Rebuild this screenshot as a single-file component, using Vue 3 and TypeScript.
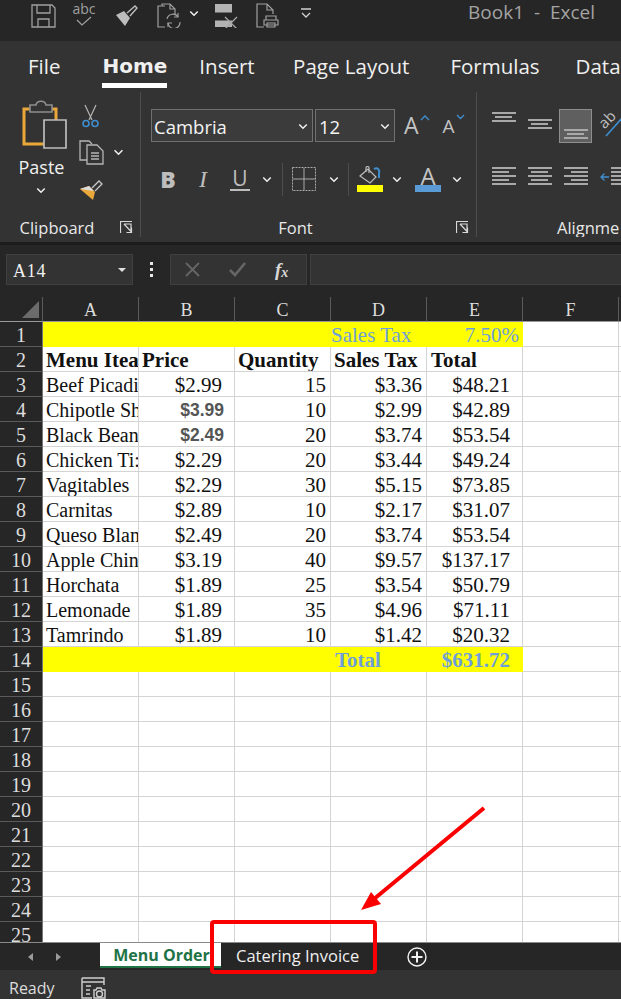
<script setup lang="ts">
interface Row {
  a?: string
  b?: string
  c?: string
  d?: string
  e?: string
}

const items: Row[] = [
  { a: 'Beef Picadi', b: '$2.99', c: '15', d: '$3.36', e: '$48.21' },
  { a: 'Chipotle Sh', b: '$3.99', c: '10', d: '$2.99', e: '$42.89' },
  { a: 'Black Bean', b: '$2.49', c: '20', d: '$3.74', e: '$53.54' },
  { a: 'Chicken Ti:', b: '$2.29', c: '20', d: '$3.44', e: '$49.24' },
  { a: 'Vagitables', b: '$2.29', c: '30', d: '$5.15', e: '$73.85' },
  { a: 'Carnitas', b: '$2.89', c: '10', d: '$2.17', e: '$31.07' },
  { a: 'Queso Blan', b: '$2.49', c: '20', d: '$3.74', e: '$53.54' },
  { a: 'Apple Chin', b: '$3.19', c: '40', d: '$9.57', e: '$137.17' },
  { a: 'Horchata', b: '$1.89', c: '25', d: '$3.54', e: '$50.79' },
  { a: 'Lemonade', b: '$1.89', c: '35', d: '$4.96', e: '$71.11' },
  { a: 'Tamrindo', b: '$1.89', c: '10', d: '$1.42', e: '$20.32' }
]

const columns = ['A', 'B', 'C', 'D', 'E', 'F']
const emptyRows = Array.from({ length: 11 }, (_, i) => i + 15)
const tabs = ['File', 'Home', 'Insert', 'Page Layout', 'Formulas', 'Data']
</script>

<template>
  <div class="excel">
    <svg width="0" height="0" class="defs">
      <defs>
        <symbol id="chev" viewBox="0 0 12 8">
          <path d="M1.5 1.5 6 6l4.5-4.5" fill="none" stroke="#f0f0f0" stroke-width="1.8" />
        </symbol>
        <symbol id="launcher" viewBox="0 0 13 13">
          <path d="M.5 12V.5H12M4 3h7v7M4 3l8 8.5M11.5 6.5v5h-5" fill="none" stroke="#d8d8d8" stroke-width="1.2" />
        </symbol>
      </defs>
    </svg>

    <header class="titlebar">
      <div class="qat">
        <svg class="q-save" width="25" height="26" viewBox="0 0 25 26" fill="none" stroke="#a0a0a0" stroke-width="1.3">
          <path d="M1 3h20l3 3v19H1zM6 3v8h13V3M7 25v-8h11v8" />
        </svg>
        <div class="q-abc">
          <span>abc</span>
          <svg width="16" height="10" viewBox="0 0 16 10"><path d="M1 4l5 5 9-8" fill="none" stroke="#a0a0a0" stroke-width="1.2" /></svg>
        </div>
        <svg class="q-brush" width="24" height="22" viewBox="0 0 24 22">
          <path d="M2 10l8-4 6 7-5 8z" fill="#bdbdbd" />
          <path d="M13 8l8-7 2 2-7 8" fill="none" stroke="#bdbdbd" stroke-width="1.4" />
        </svg>
        <svg class="q-doc" width="24" height="25" viewBox="0 0 24 25" fill="none" stroke="#a0a0a0" stroke-width="1.2">
          <path d="M8 24H1V3h7M5 3V1h8l5 5v5M13 1v5h5" />
          <path d="M10 16a6 6 0 0 1 11-2M23 19a6 6 0 0 1-12 1" />
          <path d="M21 10v4h-4M11 24v-4h4" />
        </svg>
        <svg class="q-chev" width="10" height="7"><use href="#chev" /></svg>
        <svg class="q-close" width="23" height="25" viewBox="0 0 23 25">
          <path d="M0 1h17v23H0z" fill="#b3b3b3" />
          <path d="M0 9.500h17v8H0z" fill="#262626" />
          <path d="M10 14l12 12M22 14 10 26" stroke="#a8a8a8" stroke-width="1.3" />
        </svg>
        <svg class="q-print" width="23" height="25" viewBox="0 0 23 25" fill="none" stroke="#a0a0a0" stroke-width="1.2">
          <path d="M8 24H1V1h10l6 6v4M11 1v6h6" />
          <path d="M10 13h10v4H10zM8 17h14v5H8zM11 20h8v4h-8z" fill="#262626" />
        </svg>
        <svg class="q-custom" width="12" height="11" viewBox="0 0 12 11" fill="none" stroke="#d0d0d0" stroke-width="1.3">
          <path d="M1 1h10M2 5l4 4 4-4" />
        </svg>
      </div>
      <div class="doc-title">Book1&nbsp; -&nbsp; Excel</div>
    </header>

    <nav class="tabs">
      <span v-for="t in tabs" :key="t" :class="['tab', { active: t === 'Home' }]">{{ t }}</span>
    </nav>

    <section class="ribbon">
      <div class="group clipboard">
        <div class="group-body clip-body">
          <div class="paste">
            <svg width="46" height="50" viewBox="0 0 46 50">
              <path d="M2 9h32v35H2z" fill="none" stroke="#eba83a" stroke-width="3" />
              <path d="M8 12V5h6c1-5 9-5 10 0h6v7z" fill="#333" stroke="#8f8f8f" stroke-width="1.6" />
              <path d="M22 20h22v28H22z" fill="#333" stroke="#bdbdbd" stroke-width="1.7" />
            </svg>
            <span class="paste-label">Paste</span>
            <svg class="paste-chev" width="10" height="7"><use href="#chev" /></svg>
          </div>
          <div class="clip-tools">
            <svg width="17" height="24" viewBox="0 0 17 24" fill="none">
              <path d="M3 1l7 15M14 1 7 16" stroke="#b5b5b5" stroke-width="1.2" />
              <circle cx="4" cy="19.500" r="3" stroke="#3f8fd0" stroke-width="1.6" />
              <circle cx="13" cy="19.500" r="3" stroke="#3f8fd0" stroke-width="1.6" />
            </svg>
            <div class="copy-row">
              <svg width="25" height="25" viewBox="0 0 25 25" fill="none" stroke="#b5b5b5" stroke-width="1.3">
                <path d="M8 20H1V1h9l3 3" />
                <path d="M8 5h10l6 6v13H8z" fill="#333" />
                <path d="M12 13h8M12 16h8M12 19h8" stroke-width="1.5" />
              </svg>
              <svg width="11" height="7"><use href="#chev" /></svg>
            </div>
            <svg class="painter" width="24" height="21" viewBox="0 0 24 21">
              <path d="M1 9l13 11 2-8-6-6z" fill="#eba83a" />
              <path d="M1 9l9-3 5 5" fill="#dcdcdc" />
              <path d="M13 8l7-7 3 3-7 7" fill="none" stroke="#c8c8c8" stroke-width="1.3" />
            </svg>
          </div>
        </div>
        <div class="group-label">
          <span>Clipboard</span>
          <svg class="launcher" width="13" height="13"><use href="#launcher" /></svg>
        </div>
      </div>

      <div class="group font">
        <div class="group-body font-body">
          <div class="font-row">
            <div class="select font-name">
              <span>Cambria</span>
              <svg width="10" height="7"><use href="#chev" /></svg>
            </div>
            <div class="select font-size">
              <span>12</span>
              <svg width="10" height="7"><use href="#chev" /></svg>
            </div>
            <div class="grow-btn">
              <span class="big-a">A</span>
              <svg width="10" height="6" viewBox="0 0 10 6"><path d="M1 5l4-4 4 4" fill="none" stroke="#3f8fd0" stroke-width="1.3" /></svg>
            </div>
            <div class="shrink-btn">
              <span class="small-a">A</span>
              <svg width="9" height="6" viewBox="0 0 9 6"><path d="M1 1l3.500 3.500L8 1" fill="none" stroke="#3f8fd0" stroke-width="1.3" /></svg>
            </div>
          </div>
          <div class="format-row">
            <span class="fmt bold">B</span>
            <span class="fmt italic">I</span>
            <span class="fmt under">U</span>
            <svg class="c-under" width="10" height="7"><use href="#chev" /></svg>
            <i class="divider d1"></i>
            <svg class="borders" width="24" height="24" viewBox="0 0 24 24" fill="none" stroke="#aaa">
              <path d="M.5.500h23v23H.5z" stroke-dasharray="2 1" />
              <path d="M12 1v22M1 12h22" />
            </svg>
            <svg class="c-borders" width="10" height="7"><use href="#chev" /></svg>
            <i class="divider d2"></i>
            <div class="swatch-btn fill-btn">
              <svg width="23" height="19" viewBox="0 0 23 19" fill="none">
                <path d="M1 10l8-7 8 8-6 6z" stroke="#bdbdbd" stroke-width="1.2" />
                <path d="M7 6V2c0-2 3-2 3 0v5" stroke="#bdbdbd" stroke-width="1.2" />
                <path d="M15 3c4-2 6 1 5 5v4" stroke="#3f8fd0" stroke-width="2" />
              </svg>
              <b class="swatch yellow"></b>
            </div>
            <svg class="c-fill" width="10" height="7"><use href="#chev" /></svg>
            <div class="swatch-btn color-btn">
              <span class="color-a">A</span>
              <b class="swatch blue"></b>
            </div>
            <svg class="c-color" width="10" height="7"><use href="#chev" /></svg>
          </div>
        </div>
        <div class="group-label">
          <span>Font</span>
          <svg class="launcher" width="13" height="13"><use href="#launcher" /></svg>
        </div>
      </div>

      <div class="group align">
        <div class="group-body align-body">
          <div class="align-row top-row">
            <div class="lines v-top"><i class="w24"></i><i class="w18"></i><i class="w24"></i></div>
            <div class="lines v-mid"><i class="w24"></i><i class="w18"></i><i class="w24"></i></div>
            <div class="v-active">
              <div class="lines"><i class="w24"></i><i class="w18"></i><i class="w24"></i></div>
            </div>
            <svg class="orient" width="24" height="28" viewBox="0 0 24 28">
              <text x="0" y="17" transform="rotate(-45 7 12)" class="orient-text">ab</text>
              <path d="M7 27 24 8" stroke="#3f8fd0" stroke-width="1.6" />
            </svg>
          </div>
          <div class="align-row bottom-row">
            <div class="lines a-left"><i class="w24"></i><i class="w18"></i><i class="w24"></i><i class="w18"></i><i class="w24"></i></div>
            <div class="lines a-center"><i class="w24"></i><i class="w18"></i><i class="w24"></i><i class="w18"></i><i class="w24"></i></div>
            <div class="lines a-right"><i class="w24"></i><i class="w18"></i><i class="w24"></i><i class="w18"></i><i class="w24"></i></div>
            <div class="indent">
              <svg width="10" height="10" viewBox="0 0 10 10"><path d="M9 5H1M4.500 1.500 1 5l3.500 3.500" fill="none" stroke="#3f8fd0" stroke-width="1.3" /></svg>
              <div class="lines"><i class="w24"></i><i class="w24"></i><i class="w24"></i><i class="w24"></i><i class="w24"></i></div>
            </div>
          </div>
        </div>
        <div class="group-label align-label"><span>Alignme</span></div>
      </div>
    </section>

    <section class="formula-strip">
      <div class="name-box">
        <span>A14</span>
        <b class="caret"></b>
      </div>
      <div class="grip"><i></i><i></i><i></i></div>
      <div class="fx-box">
        <svg width="15" height="15" viewBox="0 0 15 15"><path d="M1 1l13 13M14 1 1 14" stroke="#666" stroke-width="1.8" /></svg>
        <svg width="17" height="15" viewBox="0 0 17 15"><path d="M1 8l5 5L16 1" fill="none" stroke="#666" stroke-width="2.6" /></svg>
        <span class="fx">f<sub>x</sub></span>
      </div>
      <div class="formula-input"></div>
    </section>

    <section class="sheet">
      <div class="corner"><b></b></div>
      <div v-for="c in columns" :key="c" class="col-head">{{ c }}</div>
      <div class="col-tail"></div>

      <div class="row-head">1</div>
      <div class="cell fill"></div>
      <div class="cell fill"></div>
      <div class="cell fill"></div>
      <div class="cell fill blue-text tax-label">Sales Tax</div>
      <div class="cell fill blue-text right tax-value">7.50%</div>
      <div class="cell"></div>
      <div class="cell-tail"></div>

      <div class="row-head">2</div>
      <div class="cell strong">Menu Itea</div>
      <div class="cell strong">Price</div>
      <div class="cell strong">Quantity</div>
      <div class="cell strong">Sales Tax</div>
      <div class="cell strong total-head">Total</div>
      <div class="cell"></div>
      <div class="cell-tail"></div>

      <template v-for="(r, i) in items" :key="i">
        <div class="row-head">{{ i + 3 }}</div>
        <div class="cell name">{{ r.a }}</div>
        <div :class="['cell', 'right', 'money', { dim: i === 1 || i === 2 }]">{{ r.b }}</div>
        <div class="cell right">{{ r.c }}</div>
        <div class="cell right">{{ r.d }}</div>
        <div class="cell right money">{{ r.e }}</div>
        <div class="cell"></div>
        <div class="cell-tail"></div>
      </template>

      <div class="row-head">14</div>
      <div class="cell fill"></div>
      <div class="cell fill"></div>
      <div class="cell fill"></div>
      <div class="cell fill blue-text strong total-label">Total</div>
      <div class="cell fill blue-text strong right money">$631.72</div>
      <div class="cell"></div>
      <div class="cell-tail"></div>

      <template v-for="n in emptyRows" :key="n">
        <div class="row-head">{{ n }}</div>
        <div v-for="c in columns" :key="c" class="cell"></div>
        <div class="cell-tail"></div>
      </template>
    </section>

    <section class="sheet-tabs">
      <div class="nav-arrows">
        <b class="arrow left"></b>
        <b class="arrow rightward"></b>
      </div>
      <div class="sheet-tab current">Menu Order</div>
      <div class="sheet-tab other">Catering Invoice</div>
      <svg class="add" width="20" height="20" viewBox="0 0 20 20" fill="none" stroke="#f2f2f2">
        <circle cx="10" cy="10" r="9" stroke-width="1.4" />
        <path d="M10 4.500v11M4.500 10h11" stroke-width="2" />
      </svg>
    </section>

    <footer class="status">
      <span>Ready</span>
      <svg width="25" height="22" viewBox="0 0 25 22" fill="none" stroke="#d0d0d0" stroke-width="1.4">
        <path d="M1 1h22v7M1 1v20h10M1 5h22" />
        <path d="M5 9h5M5 13h4M5 17h4" />
        <path d="M13 13h2l1-2h4l1 2h3v8H13z" fill="#333" />
        <circle cx="18.500" cy="17" r="3" />
      </svg>
    </footer>

    <svg class="annotation" width="621" height="999" viewBox="0 0 621 999" fill="none">
      <rect x="212" y="922" width="163" height="50" rx="2" stroke="#fa0000" stroke-width="4" />
      <path d="M484 808 374 899" stroke="#fa0000" stroke-width="4" />
      <path d="M361 910 371 892 381 904z" fill="#fa0000" />
    </svg>
  </div>
</template>

<style>
html,
body {
  margin: 0;
  background: #262626;
}
</style>

<style scoped>
.excel {
  position: relative;
  width: 621px;
  height: 999px;
  overflow: hidden;
  display: flex;
  flex-direction: column;
  background: #262626;
  font-family: "Open Sans", "Noto Sans", sans-serif;
  color: #f0f0f0;
}

.defs {
  display: none;
}

svg {
  flex: none;
  display: block;
}

/* title bar */
.titlebar {
  height: 41px;
  flex: none;
  display: flex;
  justify-content: space-between;
  background: #262626;
}

.qat {
  display: flex;
  align-items: flex-start;
  padding: 2px 0 0 31px;
}

.q-abc {
  margin-left: 17px;
  width: 22px;
  display: flex;
  flex-direction: column;
  align-items: center;
  color: #a0a0a0;
  font-size: 14px;
  line-height: 14px;
  margin-top: 0;
}

.q-brush {
  margin: 3px 0 0 19px;
}

.q-doc {
  margin: 1px 0 0 19px;
}

.q-chev {
  margin: 8px 0 0 8px;
}

.q-close {
  margin: 1px 0 0 16px;
}

.q-print {
  margin: 1px 0 0 18px;
}

.q-custom {
  margin: 6px 0 0 21px;
}

.doc-title {
  margin: 0 26px 0 0;
  color: #a3a3a3;
  font-size: 19px;
  line-height: 24px;
}

/* ribbon tabs */
.tabs {
  height: 51px;
  flex: none;
  display: flex;
  gap: 40px;
  padding-left: 28px;
  background: #333;
  white-space: nowrap;
  font-size: 20.5px;
}

.tab {
  line-height: 50px;
  height: 47px;
}

.tab.active {
  font-family: "DejaVu Sans", sans-serif;
  font-weight: 700;
  font-size: 20px;
  border-bottom: 5px solid #fff;
  height: 42px;
  margin-left: 2px;
  margin-right: -8px;
}

.tab:nth-child(4) {
  margin-left: -1.5px;
}

.tab:nth-child(5) {
  margin-left: 1px;
}

.tab:nth-child(6) {
  margin-left: -4px;
}

/* ribbon */
.ribbon {
  height: 150px;
  flex: none;
  display: flex;
  background: #333;
  overflow: hidden;
}

.group {
  flex: none;
  display: flex;
  flex-direction: column;
  box-sizing: border-box;
  border-right: 1px solid #4d4d4d;
  margin-bottom: 5px;
}

.group-body {
  flex: 1;
}

.group-label {
  height: 24px;
  flex: none;
  margin-bottom: -2px;
  display: flex;
  align-items: center;
  justify-content: center;
  padding-right: 26px;
  box-sizing: border-box;
  font-size: 16.5px;
  color: #e8e8e8;
  position: relative;
}

.launcher {
  position: absolute;
  right: 7px;
  top: 6px;
}

.clipboard {
  width: 141px;
}

.clip-body {
  display: flex;
  padding-top: 8px;
}

.paste {
  margin-left: 22px;
  width: 46px;
  display: flex;
  flex-direction: column;
  align-items: center;
}

.paste-label {
  font-size: 18px;
  line-height: 24px;
  margin: 5px 7px 8px 0;
  color: #f0f0f0;
}

.paste-chev {
  margin-right: 9px;
}

.clip-tools {
  margin-left: 11px;
  padding-top: 4px;
  display: flex;
  flex-direction: column;
  align-items: flex-start;
}

.clip-tools > svg:first-child {
  margin-left: 3px;
}

.copy-row {
  margin-top: 12px;
  display: flex;
  align-items: center;
  gap: 9px;
}

.painter {
  margin-top: 15px;
}

.font {
  width: 336px;
}

.font-body {
  padding: 17px 0 0 10px;
}

.font-row {
  display: flex;
  align-items: flex-start;
}

.select {
  height: 33px;
  box-sizing: border-box;
  border: 1px solid #707070;
  background: #3b3b3b;
  display: flex;
  align-items: center;
  justify-content: space-between;
  padding: 2px 4px 0 2px;
  font-size: 18.5px;
  color: #f4f4f4;
}

.font-name {
  width: 162px;
}

.font-size {
  width: 80px;
  margin-left: 2px;
  padding-left: 3px;
}

.grow-btn,
.shrink-btn {
  display: flex;
  align-items: flex-start;
  color: #c4c4c4;
  font-family: "Open Sans", sans-serif;
  line-height: 32px;
}

.grow-btn {
  margin-left: 9px;
  font-size: 23px;
}

.grow-btn svg {
  margin: 6px 0 0 1px;
}

.shrink-btn {
  margin-left: 13px;
  font-size: 19px;
  line-height: 35px;
}

.shrink-btn svg {
  margin: 5px 0 0 1px;
}

.format-row {
  display: flex;
  align-items: center;
  height: 34px;
  margin-top: 18px;
  padding-left: 7px;
}

.fmt {
  color: #bdbdbd;
  width: 20px;
  text-align: center;
}

.bold {
  font-weight: 800;
  font-size: 23px;
  font-family: "Open Sans", sans-serif;
}

.italic {
  font-family: "Liberation Serif", serif;
  font-style: italic;
  font-size: 24px;
  margin-left: 15px;
}

.under {
  font-size: 21px;
  line-height: 22px;
  border-bottom: 2px solid #bdbdbd;
  margin-left: 17px;
}

.c-under {
  margin-left: 12px;
}

.divider {
  width: 1px;
  height: 33px;
  background: #4d4d4d;
  flex: none;
}

.d1 {
  margin-left: 10px;
}

.borders {
  margin-left: 9px;
}

.c-borders {
  margin-left: 13px;
}

.d2 {
  margin-left: 9px;
}

.swatch-btn {
  width: 26px;
  display: flex;
  flex-direction: column;
  align-items: center;
}

.fill-btn {
  margin-left: 8px;
}

.color-btn {
  margin-left: 13px;
}

.swatch {
  display: block;
  width: 26px;
  height: 7px;
}

.yellow {
  background: #ffff00;
}

.blue {
  background: #5b9bd5;
}

.color-a {
  font-size: 24px;
  line-height: 20px;
  height: 19px;
  color: #c4c4c4;
}

.c-fill {
  margin-left: 9px;
}

.c-color {
  margin-left: 11px;
}

.align {
  width: 144px;
  border-right: none;
  overflow: hidden;
}

.align-body {
  padding-left: 15px;
}

.align-row {
  display: flex;
  width: 200px;
}

.lines {
  display: flex;
  flex-direction: column;
  width: 24px;
  flex: none;
}

.lines i {
  display: block;
  height: 2px;
  background: #a8a8a8;
  margin-bottom: 2px;
}

.lines .w24 {
  width: 24px;
}

.lines .w18 {
  width: 17px;
  margin-left: 3px;
}

.top-row {
  height: 52px;
  padding-top: 17px;
  box-sizing: border-box;
  align-items: flex-start;
}

.v-top {
  margin-top: 3px;
}

.v-mid {
  margin: 10px 0 0 12px;
}

.v-active {
  width: 33px;
  height: 34px;
  margin-left: 7px;
  box-sizing: border-box;
  border: 1px solid #8e8e8e;
  background: #5f5f5f;
  display: flex;
  align-items: flex-end;
  justify-content: center;
  padding-bottom: 1px;
}

.orient {
  margin-left: 7px;
}

.orient-text {
  fill: #c0c0c0;
  font-size: 15px;
  font-family: "Open Sans", sans-serif;
}

.bottom-row {
  margin-top: 23px;
}

.a-left i.w18 {
  margin-left: 0;
}

.a-center {
  margin-left: 12px;
}

.a-right {
  margin-left: 12px;
}

.a-right i.w18 {
  margin-left: 7px;
}

.indent {
  margin-left: 12px;
  display: flex;
  align-items: center;
  gap: 1px;
}

.align-label {
  justify-content: flex-start;
  padding-left: 80px;
  padding-right: 0;
  white-space: nowrap;
}

/* name box and formula bar */
.formula-strip {
  height: 55px;
  flex: none;
  box-sizing: border-box;
  padding-top: 9px;
  display: flex;
  align-items: flex-start;
  background: #262626;
  border-top: 3px solid #1c1c1c;
}

.name-box {
  width: 127px;
  height: 31px;
  margin-left: 6px;
  box-sizing: border-box;
  border: 1px solid #404040;
  background: #333;
  display: flex;
  align-items: center;
  justify-content: space-between;
  padding: 3px 6px 0;
  font-family: "Liberation Serif", serif;
  font-size: 18px;
  letter-spacing: 0.8px;
}

.caret {
  width: 0;
  height: 0;
  margin-top: -3px;
  border-left: 4px solid transparent;
  border-right: 4px solid transparent;
  border-top: 4px solid #e0e0e0;
}

.grip {
  margin: 8px 0 0 17px;
  width: 4px;
  display: flex;
  flex-direction: column;
  gap: 3px;
}

.grip i {
  display: block;
  width: 3px;
  height: 3px;
  background: #e8e8e8;
}

.fx-box {
  width: 137px;
  height: 31px;
  margin-left: 16px;
  box-sizing: border-box;
  border: 1px solid #404040;
  background: #333;
  display: flex;
  align-items: center;
  padding-left: 14px;
  gap: 29px;
}

.fx {
  font-family: "Liberation Serif", serif;
  font-style: italic;
  font-weight: 700;
  font-size: 19px;
  color: #d8d8d8;
}

.fx sub {
  font-size: 14px;
  vertical-align: baseline;
  position: relative;
  top: 1px;
}

.formula-input {
  flex: 1;
  height: 31px;
  margin-left: 3px;
  box-sizing: border-box;
  border: 1px solid #404040;
  border-right: none;
  background: #333;
}

/* worksheet */
.sheet {
  height: 645px;
  flex: none;
  overflow: hidden;
  display: grid;
  grid-template-columns: 43px repeat(6, 96px) 2px;
  grid-auto-rows: 25px;
  grid-template-rows: 25px;
  background: #fff;
  font-family: "Liberation Serif", serif;
  font-size: 21px;
  color: #111;
}

.corner {
  background: #262626;
  border-bottom: 1px solid #9a9a9a;
  box-sizing: border-box;
  border-right: 1px solid #5a5a5a;
  display: flex;
  align-items: flex-end;
  justify-content: flex-end;
  padding: 0 3px 3px 0;
}

.corner b {
  width: 0;
  height: 0;
  border-left: 17px solid transparent;
  border-bottom: 17px solid #6b6b6b;
}

.col-head {
  background: #262626;
  color: #ddd;
  text-align: center;
  font-size: 18px;
  line-height: 26px;
  box-sizing: border-box;
  border-right: 1px solid #5a5a5a;
  border-bottom: 1px solid #9a9a9a;
}

.col-tail {
  background: #262626;
  border-bottom: 1px solid #9a9a9a;
}

.row-head {
  background: #262626;
  color: #ddd;
  text-align: center;
  line-height: 27px;
  box-sizing: border-box;
  border-bottom: 1px solid #5a5a5a;
  border-right: 1px solid #777;
  font-size: 20px;
}

.cell {
  box-sizing: border-box;
  border-right: 1px solid #d4d4d4;
  border-bottom: 1px solid #d4d4d4;
  padding: 0 0 0 3px;
  line-height: 27px;
  white-space: nowrap;
  overflow: hidden;
}

.cell.name {
  font-size: 20px;
}

.cell-tail {
  border-bottom: 1px solid #d4d4d4;
}

.cell.right {
  text-align: right;
  padding: 0 4px 0 0;
}

.cell.money {
  padding-right: 12px;
}

.cell.dim {
  color: #555;
  font-family: "Liberation Sans", sans-serif;
  font-weight: 700;
  font-size: 17.5px;
  padding-right: 10px;
}

.cell.fill {
  background: #ffff00;
  border-color: #ffff00;
}

.cell.strong {
  font-weight: 700;
}

.blue-text {
  color: #6f9fd8;
}

.cell.tax-label {
  padding-left: 0;
}

.cell.tax-value {
  padding-right: 3px;
}

.total-head {
  padding-left: 4px;
}

.cell.total-label {
  padding-left: 4px;
}

/* sheet tabs */
.sheet-tabs {
  height: 28px;
  flex: none;
  display: flex;
  align-items: stretch;
  box-sizing: border-box;
  background: #262626;
  border-top: 1px solid #8a8a8a;
}

.nav-arrows {
  width: 100px;
  display: flex;
  align-items: center;
  padding-left: 28px;
  box-sizing: border-box;
  gap: 23px;
}

.arrow {
  width: 0;
  height: 0;
  border-top: 4px solid transparent;
  border-bottom: 4px solid transparent;
}

.arrow.left {
  border-right: 5px solid #9a9a9a;
}

.arrow.rightward {
  border-left: 5px solid #9a9a9a;
}

.sheet-tab {
  display: flex;
  align-items: center;
  justify-content: center;
  font-size: 16px;
  white-space: nowrap;
}

.current {
  width: 121px;
  height: 25px;
  box-sizing: border-box;
  background: #fff;
  color: #217346;
  font-weight: 700;
  border-bottom: 2px solid #217346;
  padding-left: 2px;
}

.other {
  width: 155px;
  padding: 0 10px 3px 15px;
  box-sizing: border-box;
  color: #f0f0f0;
  justify-content: flex-start;
  font-size: 16.5px;
}

.add {
  margin: 4px 0 0 31px;
}

/* status bar */
.status {
  height: 29px;
  flex: none;
  display: flex;
  align-items: flex-end;
  gap: 26px;
  padding-left: 9px;
  background: #333;
  font-size: 16px;
  color: #ddd;
}

.status span {
  line-height: 22px;
}

/* red callout added on top of the screenshot */
.annotation {
  position: absolute;
  left: 0;
  top: 0;
  pointer-events: none;
}
</style>
